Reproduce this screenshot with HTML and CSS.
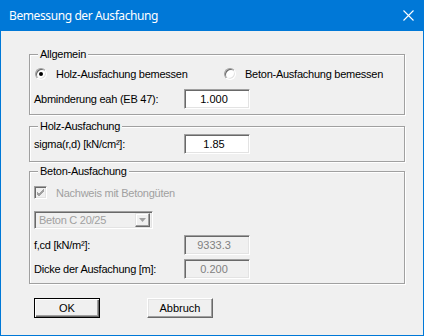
FILE: index.html
```html
<!DOCTYPE html>
<html lang="de">
<head>
  <meta charset="UTF-8">
  <title>Bemessung der Ausfachung</title>
  <link rel="stylesheet" href="styles.css">
</head>
<body>
  <div class="window">
    <div class="titlebar">
      <span class="title">Bemessung der Ausfachung</span>
      <svg class="close" width="11" height="11" viewBox="0 0 11 11">
        <path d="M0.5 0.5 L10.5 10.5 M10.5 0.5 L0.5 10.5" stroke="#fff" stroke-width="1.1" fill="none"/>
      </svg>
    </div>

    <div class="client">
      <fieldset class="group group-general">
        <legend>Allgemein</legend>
        <div class="radio-row">
          <label class="radio checked"><span class="radio-dot"></span>Holz-Ausfachung bemessen</label>
          <label class="radio"><span class="radio-dot"></span>Beton-Ausfachung bemessen</label>
        </div>
        <div class="field">
          <span class="field-label">Abminderung eah (EB 47):</span>
          <input class="edit" type="text" value="1.000">
        </div>
      </fieldset>

      <fieldset class="group group-wood">
        <legend>Holz-Ausfachung</legend>
        <div class="field">
          <span class="field-label">sigma(r,d) [kN/cm²]:</span>
          <input class="edit" type="text" value="1.85">
        </div>
      </fieldset>

      <fieldset class="group group-concrete">
        <legend>Beton-Ausfachung</legend>
        <label class="check disabled">
          <span class="check-box">
            <svg width="9" height="9" viewBox="0 0 9 9">
              <path d="M1 4 L3 6 L8 1 M1 5 L3 7 L8 2 M1 6 L3 8 L8 3" stroke="#a0a0a0" stroke-width="1" fill="none"/>
            </svg>
          </span>
          Nachweis mit Betongüten
        </label>
        <div class="combo disabled">
          <span class="combo-text">Beton C 20/25</span>
          <span class="combo-btn">
            <svg width="7" height="4" viewBox="0 0 7 4"><path d="M0 0 H7 L3.5 4 Z" fill="#a0a0a0"/></svg>
          </span>
        </div>
        <div class="field field-fcd">
          <span class="field-label">f,cd [kN/m²]:</span>
          <input class="edit" type="text" value="9333.3" readonly>
        </div>
        <div class="field field-thick">
          <span class="field-label">Dicke der Ausfachung [m]:</span>
          <input class="edit" type="text" value="0.200" readonly>
        </div>
      </fieldset>

      <div class="buttons">
        <button class="btn btn-default" type="button">OK</button>
        <button class="btn" type="button">Abbruch</button>
      </div>
    </div>
  </div>
</body>
</html>
```

FILE: styles.css
```css
:root {
  --face: #f0f0f0;
  --accent: #0078d7;
  --shadow: #a0a0a0;
  --dark: #696969;
  --light: #e3e3e3;
  --gray-text: #a0a0a0;
}

html,
body {
  margin: 0;
  padding: 0;
}

body {
  font-family: "Liberation Sans", Arial, sans-serif;
  font-size: 11px;
  letter-spacing: -0.25px;
  color: #000;
  background: var(--face);
}

* {
  box-sizing: border-box;
}

.window {
  width: 424px;
  height: 336px;
  border: 1px solid var(--accent);
  border-top: 0;
  background: var(--face);
}

.titlebar {
  height: 31px;
  display: flex;
  align-items: center;
  justify-content: space-between;
  padding: 0 9px 0 8px;
  background: var(--accent);
  color: #fff;
}

.title {
  font-family: "Noto Sans", sans-serif;
  font-size: 12px;
  letter-spacing: -0.4px;
  padding-bottom: 1px;
}

.close {
  display: block;
}

.client {
  padding: 17px 0 0 28px;
}

/* group boxes */
.group {
  width: 376px;
  margin: 0;
  padding: 0 4px;
  border: 1px solid var(--shadow);
  box-shadow: 1px 1px 0 #fff, inset 1px 1px 0 #fff;
}

.group legend {
  margin-left: 4px;
  padding: 0 2px;
  line-height: 13px;
  background: var(--face);
}

.group-general {
  padding-top: 4px;
  padding-bottom: 5px;
}

.group-wood {
  margin-top: 5px;
  padding-top: 1px;
  padding-bottom: 7px;
}

.group-concrete {
  margin-top: 3px;
  padding-top: 8px;
  padding-bottom: 4px;
}

/* radio buttons */
.radio-row {
  display: flex;
  align-items: center;
  height: 18px;
  margin-bottom: 6px;
}

.radio {
  display: flex;
  align-items: center;
  gap: 9px;
}

.radio:first-child {
  width: 190px;
  padding-left: 1px;
}

.radio-dot {
  width: 12px;
  height: 12px;
  border-radius: 50%;
  border: 1px solid;
  border-color: var(--shadow) #fff #fff var(--shadow);
  box-shadow: inset 1px 1px 0 var(--dark), inset -1px -1px 0 var(--light);
  background: #fff;
  display: flex;
  align-items: center;
  justify-content: center;
}

.radio.checked .radio-dot::after {
  content: "";
  width: 4px;
  height: 4px;
  border-radius: 50%;
  background: #000;
}

/* edit rows */
.field {
  display: flex;
  align-items: center;
  height: 20px;
}

.field-label {
  width: 150px;
}

.edit {
  width: 66px;
  height: 20px;
  margin: 0;
  padding: 0 6px 0 0;
  font: inherit;
  color: #000;
  text-align: center;
  background: #fff;
  border: 1px solid;
  border-color: var(--shadow) #fff #fff var(--shadow);
  box-shadow: inset 1px 1px 0 var(--dark), inset -1px -1px 0 var(--light);
  outline: none;
}

.edit[readonly] {
  background: var(--face);
  color: #808080;
}

.field-fcd {
  margin-top: 6px;
}

.field-thick {
  margin-top: 4px;
}

/* checkbox */
.check {
  display: flex;
  align-items: center;
  gap: 9px;
  height: 13px;
}

.check.disabled {
  color: var(--gray-text);
}

.check-box {
  width: 13px;
  height: 13px;
  border: 1px solid;
  border-color: var(--shadow) #fff #fff var(--shadow);
  box-shadow: inset 1px 1px 0 var(--dark), inset -1px -1px 0 var(--light);
  background: var(--face);
  display: flex;
  align-items: center;
  justify-content: center;
}

.check-box svg {
  display: block;
}

/* combo box */
.combo {
  width: 119px;
  height: 18px;
  margin-top: 12px;
  display: flex;
  align-items: center;
  justify-content: space-between;
  padding: 2px;
  border: 1px solid;
  border-color: var(--shadow) #fff #fff var(--shadow);
  box-shadow: inset 1px 1px 0 var(--dark), inset -1px -1px 0 var(--light);
  background: var(--face);
}

.combo-text {
  padding-left: 2px;
  color: var(--gray-text);
}

.combo-btn {
  width: 15px;
  height: 14px;
  display: flex;
  align-items: center;
  justify-content: center;
  border: 1px solid;
  border-color: var(--light) var(--dark) var(--dark) var(--light);
  box-shadow: inset -1px -1px 0 var(--shadow), inset 1px 1px 0 #fff;
  background: var(--face);
}

.combo-btn svg {
  display: block;
}

/* push buttons */
.buttons {
  display: flex;
  gap: 47px;
  margin-top: 14px;
  padding-left: 5px;
}

.btn {
  width: 66px;
  height: 20px;
  margin: 0;
  padding: 0;
  font: inherit;
  color: #000;
  background: var(--face);
  border: 1px solid;
  border-color: #fff var(--dark) var(--dark) #fff;
  box-shadow: inset -1px -1px 0 var(--shadow), inset 1px 1px 0 var(--light);
}

.btn-default {
  border-color: #000;
  box-shadow: inset 1px 1px 0 #fff, inset -1px -1px 0 var(--dark), inset -2px -2px 0 var(--shadow);
}
```
